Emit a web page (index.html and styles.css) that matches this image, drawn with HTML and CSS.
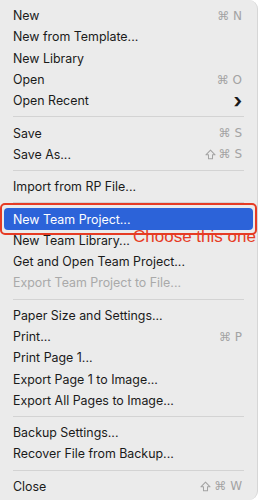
FILE: index.html
```html
<!DOCTYPE html>
<html lang="en">
<head>
  <meta charset="UTF-8">
  <meta name="viewport" content="width=device-width, initial-scale=1.0">
  <title>File Menu</title>
  <link rel="stylesheet" href="styles.css">
</head>
<body>

  <div class="menu">
    <div class="item"><span>New</span><span class="key">⌘ N</span></div>
    <div class="item"><span>New from Template...</span></div>
    <div class="item"><span>New Library</span></div>
    <div class="item"><span>Open</span><span class="key">⌘ O</span></div>
    <div class="item"><span>Open Recent</span><span class="arrow">&#x203A;</span></div>
    <div class="sep"></div>
    <div class="item"><span>Save</span><span class="key">⌘ S</span></div>
    <div class="item"><span>Save As...</span><span class="key"><svg class="shift" viewBox="0 0 12 12"><path d="M6 1.2 L11 6.4 H8.2 V10.6 H3.8 V6.4 H1 Z"/></svg>⌘ S</span></div>
    <div class="sep"></div>
    <div class="item"><span>Import from RP File...</span></div>
    <div class="sep"></div>
    <div class="item active"><span>New Team Project...</span></div>
    <div class="item"><span>New Team Library...</span><span class="note">Choose this one</span></div>
    <div class="item"><span>Get and Open Team Project...</span></div>
    <div class="item disabled"><span>Export Team Project to File...</span></div>
    <div class="sep"></div>
    <div class="item"><span>Paper Size and Settings...</span></div>
    <div class="item"><span>Print...</span><span class="key">⌘ P</span></div>
    <div class="item"><span>Print Page 1...</span></div>
    <div class="item"><span>Export Page 1 to Image...</span></div>
    <div class="item"><span>Export All Pages to Image...</span></div>
    <div class="sep"></div>
    <div class="item"><span>Backup Settings...</span></div>
    <div class="item"><span>Recover File from Backup...</span></div>
    <div class="sep"></div>
    <div class="item"><span>Close</span><span class="key"><svg class="shift" viewBox="0 0 12 12"><path d="M6 1.2 L11 6.4 H8.2 V10.6 H3.8 V6.4 H1 Z"/></svg>⌘ W</span></div>
  </div>

</body>
</html>
```

FILE: styles.css
```css
body {
  margin: 0;
  background: #ffffff;
  font-family: Inter, 'Noto Sans', sans-serif;
}

/* Menu panel */
.menu {
  width: 258px;
  height: 500px;
  box-sizing: border-box;
  padding: 5px 4px 0 4px;
  background: #ebebeb;
  border-right: 1px solid #d6d6d6;
  border-radius: 0 9px 9px 0;
}

.item {
  position: relative;
  display: flex;
  justify-content: space-between;
  align-items: center;
  height: 21.3px;
  padding: 0 9px;
  font-size: 12.4px;
  color: #1a1a1a;
}

.key {
  display: flex;
  align-items: center;
  gap: 3px;
  color: #a3a3a3;
  font-family: 'DejaVu Sans', sans-serif;
  font-size: 12px;
  margin-right: 2px;
}

.shift {
  width: 11px;
  height: 11px;
  fill: none;
  stroke: #a3a3a3;
  stroke-width: 1.1;
  stroke-linejoin: round;
}

.arrow {
  font-size: 20px;
  font-weight: bold;
  line-height: 1;
  margin-right: 2px;
}

.disabled {
  color: #a9a9a9;
}

.sep {
  height: 1px;
  margin: 5px 9px;
  background: #d3d3d3;
}

/* Highlighted row with the red call-out box */
.active {
  background: #2c63d9;
  color: #ffffff;
  border-radius: 4px;
}

.active::after {
  content: "";
  position: absolute;
  top: -5px;
  left: -4px;
  right: -4px;
  bottom: -5px;
  border: 2px solid #e63b24;
  border-radius: 5px;
}

.note {
  position: absolute;
  left: 129px;
  top: -3px;
  font-family: 'Liberation Sans', sans-serif;
  font-size: 17px;
  color: #e63b24;
  white-space: nowrap;
}
```
